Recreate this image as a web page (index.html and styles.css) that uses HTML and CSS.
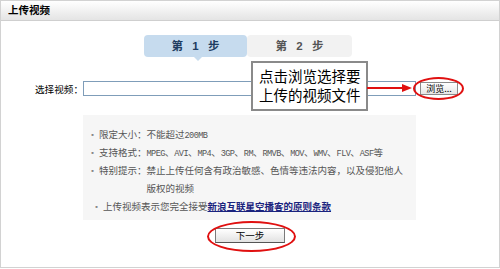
FILE: index.html
```html
<!DOCTYPE html>
<html lang="zh-CN">
<head>
    <meta charset="UTF-8">
    <title>上传视频</title>
    <link rel="stylesheet" href="styles.css">
</head>
<body>
  <div class="panel">
    <div class="panel-head">上传视频</div>

    <div class="steps">
      <div class="step step-on">第 1 步</div>
      <div class="step">第 2 步</div>
    </div>

    <div class="pick-row">
      <label class="pick-label" for="video">选择视频：</label>
      <input class="pick-input" type="text" id="video">
      <button class="browse">浏览...</button>
    </div>

    <div class="info">
      <div class="info-item">
        <span class="dot">▪</span>
        <span class="info-key">限定大小：</span>
        <span class="info-val">不能超过<span class="asc">200MB</span></span>
      </div>
      <div class="info-item">
        <span class="dot">▪</span>
        <span class="info-key">支持格式：</span>
        <span class="info-val"><span class="asc">MPEG</span>、<span class="asc">AVI</span>、<span class="asc">MP4</span>、<span class="asc">3GP</span>、<span class="asc">RM</span>、<span class="asc">RMVB</span>、<span class="asc">MOV</span>、<span class="asc">WMV</span>、<span class="asc">FLV</span>、<span class="asc">ASF</span>等</span>
      </div>
      <div class="info-item">
        <span class="dot">▪</span>
        <span class="info-key">特别提示：</span>
        <span class="info-val">禁止上传任何含有政治敏感、色情等违法内容，以及侵犯他人版权的视频</span>
      </div>
      <div class="info-item info-last">
        <span class="dot">▪</span>
        <span>上传视频表示您完全接受<a href="#" class="terms">新浪互联星空播客的原则条款</a></span>
      </div>
    </div>

    <button class="next">下一步</button>

    <!-- tutorial marks drawn over the form -->
    <div class="callout">点击浏览选择要<br>上传的视频文件</div>
    <svg class="arrow" width="46" height="10" viewBox="0 0 46 10">
      <line x1="0" y1="5" x2="38" y2="5" stroke="#e01010" stroke-width="2"/>
      <polygon points="35,1 45,5 35,9" fill="#e01010"/>
    </svg>
    <div class="ring ring-browse"></div>
    <div class="ring ring-next"></div>
  </div>
</body>
</html>
```

FILE: styles.css
```css
body {
    margin: 0;
    font-family: "Liberation Sans", "Noto Sans CJK SC", sans-serif;
    font-size: 10px;
    color: #000;
    background: #fff;
}

.panel {
    position: relative;
    width: 498px;
    height: 266px;
    border: 1px solid #d2d2d2;
    background: #fff;
}

.panel-head {
    height: 19px;
    line-height: 19px;
    padding-left: 7px;
    border-bottom: 1px solid #cfcfcf;
    background: linear-gradient(#ffffff, #e4e4e4);
    font-weight: bold;
    font-size: 10.5px;
}

.steps {
    display: flex;
    margin: 14px 0 0 143px;
}

.step {
    position: relative;
    width: 105px;
    height: 22px;
    line-height: 22px;
    text-align: center;
    background: #f2f2f2;
    color: #555;
    font-weight: bold;
    font-size: 11.5px;
    word-spacing: 6px;
    border-radius: 4px;
}

.step-on {
    width: 103px;
    background: #c6dbee;
    color: #1e3c60;
}

.step-on::after {
    content: "";
    position: absolute;
    left: 50px;
    bottom: -4px;
    border-left: 4px solid transparent;
    border-right: 4px solid transparent;
    border-top: 4px solid #c6dbee;
}

.pick-row {
    display: flex;
    align-items: center;
    margin-top: 24px;
}

.pick-label {
    width: 82px;
    text-align: right;
    font-size: 9.6px;
}

.pick-input {
    box-sizing: border-box;
    width: 333px;
    height: 15px;
    margin: 0;
    border: 1px solid #7f9db9;
    padding: 0;
}

.browse {
    box-sizing: border-box;
    width: 38px;
    height: 13px;
    margin: 0 0 0 4px;
    padding: 0;
    border: 1px solid #8a8a8a;
    background: linear-gradient(#ffffff, #e6e6e6);
    font-family: "Noto Sans CJK SC", sans-serif;
    font-size: 9px;
    line-height: 11px;
    color: #000;
}

.info {
    box-sizing: border-box;
    width: 333px;
    height: 105px;
    margin: 19px 0 0 82px;
    padding: 9.5px 10px 0 6px;
    background: #f6f6f6;
    color: #555;
    font-family: "Noto Sans CJK SC", sans-serif;
    font-size: 9.5px;
    line-height: 18px;
}

.info-item {
    display: flex;
}

.dot {
    width: 10px;
    font-size: 7px;
    color: #888;
}

.info-val {
    flex: 1;
}

.asc {
    font-family: "Liberation Mono", monospace;
    font-size: 8.6px;
    letter-spacing: -0.6px;
    line-height: 1;
}

.info-last {
    padding-left: 4px;
}

.terms {
    color: #1a237e;
    font-weight: bold;
}

.next {
    display: block;
    box-sizing: border-box;
    width: 70px;
    height: 15px;
    margin: 8px auto 0;
    padding: 0;
    border: 1px solid #7a7a7a;
    border-bottom-color: #555;
    background: linear-gradient(#ffffff, #e2e2e2);
    font-family: "Noto Sans CJK SC", sans-serif;
    font-size: 9.5px;
    line-height: 13px;
    color: #000;
}

.callout {
    position: absolute;
    left: 250px;
    top: 60px;
    box-sizing: border-box;
    width: 117px;
    height: 50px;
    padding: 3px 0 0 6px;
    border: 2px solid #8a8a8a;
    background: #fff;
    font-family: "Noto Sans CJK SC", sans-serif;
    font-size: 14.5px;
    line-height: 19px;
    color: #000;
}

.arrow {
    position: absolute;
    left: 366px;
    top: 82px;
}

.ring {
    position: absolute;
    box-sizing: border-box;
    border: 2px solid #e01010;
    border-radius: 50%;
}

.ring-browse {
    left: 412px;
    top: 76px;
    width: 51px;
    height: 23px;
}

.ring-next {
    left: 206px;
    top: 220px;
    width: 89px;
    height: 31px;
}
```
